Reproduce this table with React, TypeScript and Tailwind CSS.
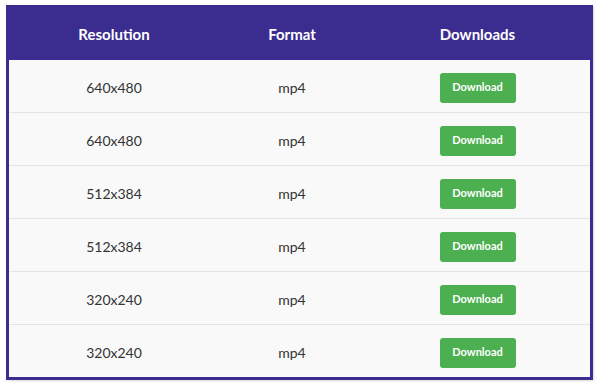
import React from "react";

const rows = [
  ["640x480", "mp4"],
  ["640x480", "mp4"],
  ["512x384", "mp4"],
  ["512x384", "mp4"],
  ["320x240", "mp4"],
  ["320x240", "mp4"],
];

export default function App() {
  return (
    <div className="w-[600px] h-[384px] bg-white pt-[5px] pl-[6px]" style={{ fontFamily: "Lato, 'Open Sans', sans-serif" }}>
      <div className="w-[587px] border-[3px] border-[#3b2c8f] bg-[#f9f9f9] shadow-[1px_1px_2px_rgba(0,0,0,0.15)]">
        <div className="grid grid-cols-[210px_146px_1fr] h-[52px] bg-[#3b2c8f] text-white font-bold text-[15px] items-center text-center">
          <div>Resolution</div>
          <div>Format</div>
          <div>Downloads</div>
        </div>
        {rows.map((r, i) => (
          <div
            key={i}
            className={`grid grid-cols-[210px_146px_1fr] items-center text-center text-[14px] text-[#333] pt-[3px] ${i < rows.length - 1 ? "h-[53px] border-b border-[#e4e4e4]" : "h-[52px]"}`}
          >
            <div>{r[0]}</div>
            <div>{r[1]}</div>
            <div className="flex justify-center">
              <button className="w-[76px] h-[30px] rounded-[3px] bg-[#4caf50] text-white text-[11px] font-bold">
                Download
              </button>
            </div>
          </div>
        ))}
      </div>
    </div>
  );
}
